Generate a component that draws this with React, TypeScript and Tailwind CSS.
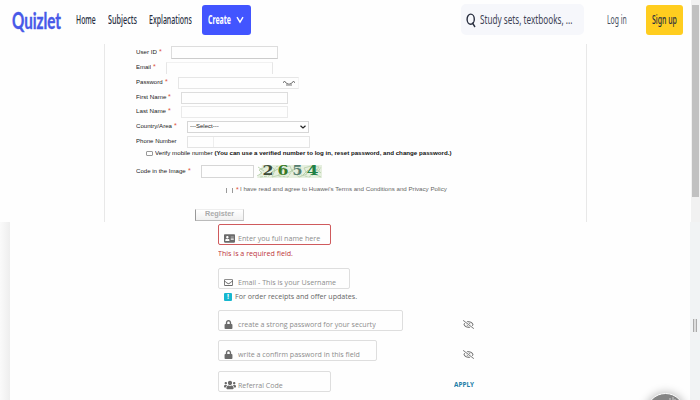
import { useLayoutEffect, useRef, useState } from "react";
import type { ReactNode } from "react";
import { FaAddressCard, FaLock, FaUsers, FaRegEnvelope, FaRegEyeSlash } from "react-icons/fa";

/* One line of text, condensed or widened to fill the width of its box. */
function Fit({ className, children }: { className: string; children: ReactNode }) {
  const box = useRef<HTMLDivElement>(null);
  const line = useRef<HTMLSpanElement>(null);
  const [scale, setScale] = useState(1);
  useLayoutEffect(() => {
    if (box.current && line.current) {
      setScale(box.current.clientWidth / line.current.offsetWidth);
    }
  }, []);
  return (
    <div ref={box} className={`shrink-0 whitespace-nowrap leading-none ${className}`}>
      <span ref={line} className="inline-block origin-left" style={{ transform: `scaleX(${scale})` }}>
        {children}
      </span>
    </div>
  );
}

function Star({ className = "" }: { className?: string }) {
  return <span className={`shrink-0 text-[7px] leading-[7px] text-[#e0523a] ${className}`}>*</span>;
}

function Row({ label, width, gap, star = true, height = "h-[15px]", children }: { label: string; width: string; gap: string; star?: boolean; height?: string; children: ReactNode }) {
  return (
    <div className={`flex items-center ${height} ${gap}`}>
      <div className="flex items-center gap-[2px]">
        <Fit className={`text-[5.6px] text-[#222] ${width}`}>{label}</Fit>
        {star && <Star className="-mt-[3px] w-[3px]" />}
      </div>
      {children}
    </div>
  );
}

function Field({ className, icon, children }: { className: string; icon: ReactNode; children: ReactNode }) {
  return (
    <div className={`flex h-[21px] shrink-0 items-center rounded-[2px] border pl-[5px] pt-[8px] text-[#6b6b6b] ${className}`}>
      <div className="-mt-px flex w-[14px] shrink-0 items-center">{icon}</div>
      {children}
    </div>
  );
}

function Header() {
  return (
    <header className="flex h-[44px] items-start pl-[12px] pt-[4px] font-['Noto_Sans',sans-serif]">
      <div className="flex h-[31px] flex-1 items-center">
        <Fit className="w-[49px] pt-[2px] font-['Lato',sans-serif] text-[22px] font-bold text-[#4759e8] [-webkit-text-stroke:0.4px_#4759e8]">Quizlet</Fit>
        <Fit className="ml-[15px] w-[20px] pt-px text-[12px] font-medium text-[#282e3e]">Home</Fit>
        <Fit className="ml-[12px] w-[29px] pt-px text-[12px] font-medium text-[#282e3e]">Subjects</Fit>
        <Fit className="ml-[12px] w-[43px] pt-px text-[12px] font-medium text-[#282e3e]">Explanations</Fit>
        <button className="ml-[10px] flex h-[30px] w-[49px] items-center rounded-[3px] bg-[#4255ff] pl-[6px] text-left text-white">
          <Fit className="w-[23px] text-[11.5px] font-bold">Create</Fit>
          <svg viewBox="0 0 8 8" className="ml-[5px] size-[8px]" fill="none" stroke="currentColor" strokeWidth="1.4">
            <path d="M1 1.2 4 6.2 7 1.2" />
          </svg>
        </button>
        <div className="ml-[210px] flex h-[31px] w-[123px] items-center rounded-[5px] bg-[#f6f7fb] pl-[5px] text-[#3d4355]">
          <svg viewBox="0 0 10 16" className="h-[16px] w-[10px]" fill="none" stroke="#282e3e" strokeWidth="1.4">
            <ellipse cx="4.7" cy="7.2" rx="3.6" ry="5.1" />
            <path d="M6.2 10.6 9 15" />
          </svg>
          <Fit className="ml-[4px] w-[92px] text-[12px]">Study sets, textbooks, ...</Fit>
        </div>
        <Fit className="ml-[23px] w-[20px] text-[12px] text-[#484e60]">Log in</Fit>
        <button className="ml-[19px] flex h-[30px] w-[37px] items-center rounded-[3px] bg-[#ffcd1f] pl-[6px] text-left text-[#282e3e]">
          <Fit className="w-[25px] text-[12px] font-medium">Sign up</Fit>
        </button>
      </div>
    </header>
  );
}

function Captcha() {
  return (
    <svg viewBox="0 0 65 13" className="ml-[3px] h-[13px] w-[65px] shrink-0" role="img">
      <path d="M5 0H65V13H0L3 8Z" fill="#e6efdf" />
      <g fill="none" stroke="#bfd5b3" strokeWidth="1">
        <path d="M0 11 5 8 2 5 8 2 14 1 18 5 15 12 23 10 27 2 33 1 35 6 42 12 50 9 47 3 54 1 62 2 57 9 64 12" />
        <path d="M3 12 12 11 20 1 25 5 21 11 31 12 38 1 44 3 40 9 52 12 61 7 64 2" strokeDasharray="3 1" />
        <path d="M1 2 7 6M15 7l6-3M31 8l7-4M46 10l5-5M59 4l5 4" stroke="#a5c596" strokeWidth=".7" />
      </g>
      <g fontFamily="DejaVu Serif, serif" fontSize="12" fontWeight="bold">
        <text x="5.5" y="10.3" textLength="11" lengthAdjust="spacingAndGlyphs" fill="#3c4a35">2</text>
        <text x="20.5" y="10.3" textLength="11" lengthAdjust="spacingAndGlyphs" fill="#397a28">6</text>
        <text x="35.5" y="10.3" textLength="10" lengthAdjust="spacingAndGlyphs" fill="#547d70">5</text>
        <text x="49.5" y="10.3" textLength="12" lengthAdjust="spacingAndGlyphs" fill="#218046">4</text>
      </g>
    </svg>
  );
}

function RegisterForm() {
  return (
    <section className="ml-[104px] flex h-[178px] w-[483px] flex-col border-x border-[#e8e8e8] pl-[31px] pt-px font-['Liberation_Sans',sans-serif]">
      <Row label="User ID" width="w-[21px]" gap="gap-[9px]">
        <div className="h-[13px] w-[107px] border border-[#ddd] border-b-[#ccc]" />
      </Row>
      <Row label="Email" width="w-[15px]" gap="gap-[10px]">
        <div className="h-[12px] w-[107px] border-x border-t border-[#e6e6e6] border-t-[#f1f1f1]" />
      </Row>
      <Row label="Password" width="w-[27px]" gap="gap-[10px]">
        <div className="flex h-[12px] w-[121px] items-center justify-end border border-[#e6e6e6] border-r-[#f4f4f4] pr-[3px]">
          <svg viewBox="0 0 12 6" className="h-[6px] w-[12px]" fill="none" stroke="#555" strokeWidth=".8">
            <path d="M0 3 1.5 1 3 3Q6 5.5 9 3L10.5 1 12 3M4 4v2M6 4.5V6M8 4v2" />
          </svg>
        </div>
      </Row>
      <Row label="First Name" width="w-[30px]" gap="gap-[10px]">
        <div className="h-[12px] w-[107px] border border-[#ddd]" />
      </Row>
      <Row label="Last Name" width="w-[30px]" gap="gap-[10px]" height="h-[14px]">
        <div className="h-[12px] w-[107px] border border-[#eaeaea]" />
      </Row>
      <Row label="Country/Area" width="w-[36px]" gap="gap-[10px]">
        <div className="flex h-[12px] w-[122px] items-center border border-[#d6d6d6] pl-[2px]">
          <Fit className="w-[29px] text-[5.6px] text-[#222]">---Select---</Fit>
          <svg viewBox="0 0 6 4" className="ml-auto mr-[2px] h-[4px] w-[6px]" fill="none" stroke="#222" strokeWidth="1.2">
            <path d="M.5.8 3 3 5.5.8" />
          </svg>
        </div>
      </Row>
      <Row label="Phone Number" width="w-[41px]" gap="gap-[10px]" star={false}>
        <div className="flex h-[12px] w-[123px] border border-[#e4e4e4]">
          <div className="w-[26px] border-r border-[#eee]" />
        </div>
      </Row>
      <div className="flex h-[9px] items-center pl-[10px]">
        <span className="h-[5px] w-[7px] shrink-0 rounded-[1px] border border-[#999]" />
        <Fit className="ml-[2px] w-[296px] text-[5.6px] text-[#111]">
          Verify mobile number <b>(You can use a verified number to log in, reset password, and change password.)</b>
        </Fit>
      </div>
      <div className="mt-[7px] flex h-[13px] items-center">
        <Fit className="w-[50px] text-[5.6px] text-[#222]">Code in the Image</Fit>
        <Star className="-mt-[3px] ml-[2px] w-[3px]" />
        <div className="ml-[10px] h-[13px] w-[53px] border border-[#d6d6d6]" />
        <Captcha />
      </div>
      <div className="mt-[8px] flex h-[8px] items-center pl-[90px]">
        <span className="h-[5px] w-[7px] shrink-0 border-x border-[#999]" />
        <Star className="-mt-[2px] ml-[3px] w-[3px]" />
        <Fit className="ml-px w-[207px] text-[5.6px] text-[#666]">
          I have read and agree to Huawei's Terms and Conditions and Privacy Policy
        </Fit>
      </div>
      <button className="ml-[59px] mt-[15px] flex h-[12px] w-[49px] shrink-0 items-center border border-[#bbb] border-l-[#999] border-t-[#eee] border-r-[#ccc] bg-linear-to-b from-white to-[#f0f0f0] pl-[9px] text-left text-[#aaa]">
        <Fit className="w-[29px] pb-px text-[6.5px] font-bold">Register</Fit>
      </button>
    </section>
  );
}

function AccountForm() {
  return (
    <section className="flex h-[178px] w-[690px] font-['Open_Sans',sans-serif]">
      <div className="w-[10px] shrink-0 bg-linear-to-r from-[#fafafa] to-[#eee]" />
      <div className="flex w-[472px] flex-col pl-[208px] pt-[2px]">
        <Field className="w-[113px] border-[#cf5a5d]" icon={<FaAddressCard size={11} />}>
          <Fit className="w-[82px] text-[7.5px] text-[#8d8d8d]">Enter you full name here</Fit>
        </Field>
        <Fit className="mt-[5px] h-[8px] w-[75px] text-[7.5px] text-[#bd343b]">This is a required field.</Fit>
        <Field className="mt-[10px] w-[132px] border-[#dedede]" icon={<FaRegEnvelope size={9} />}>
          <Fit className="w-[98px] text-[7.5px] text-[#8d8d8d]">Email - This is your Username</Fit>
        </Field>
        <div className="mt-[3px] flex h-[9px] items-center pl-[6px]">
          <span className="flex size-[8px] items-center justify-center rounded-[1px] bg-[#16b7cf] text-[7px] font-bold leading-none text-white">!</span>
          <Fit className="ml-[3px] w-[122px] text-[7.5px] text-[#666]">For order receipts and offer updates.</Fit>
        </div>
        <div className="mt-[9px] flex">
          <Field className="w-[185px] border-[#dedede]" icon={<FaLock size={9} />}>
            <Fit className="w-[138px] text-[7.5px] text-[#8d8d8d]">create a strong password for your securty</Fit>
          </Field>
          <FaRegEyeSlash size={11} className="ml-[60px] mt-[9px] shrink-0 text-[#666]" />
        </div>
        <div className="mt-[9px] flex">
          <Field className="w-[159px] border-[#dedede]" icon={<FaLock size={9} />}>
            <Fit className="w-[122px] text-[7.5px] text-[#8d8d8d]">write a confirm password in this field</Fit>
          </Field>
          <FaRegEyeSlash size={11} className="ml-[86px] mt-[9px] shrink-0 text-[#666]" />
        </div>
        <div className="mt-[10px] flex">
          <Field className="w-[113px] border-[#dedede]" icon={<FaUsers size={12} />}>
            <Fit className="w-[45px] text-[7.5px] text-[#8d8d8d]">Referral Code</Fit>
          </Field>
          <Fit className="ml-[123px] mt-[10px] w-[20px] text-[7px] font-bold text-[#207da7]">APPLY</Fit>
        </div>
      </div>
    </section>
  );
}

export default function App() {
  return (
    <div className="relative flex h-[400px] w-[700px] overflow-hidden bg-[#fefefe]">
      <main className="w-[690px] shrink-0">
        <Header />
        <RegisterForm />
        <AccountForm />
      </main>
      <aside className="flex w-[10px] flex-col">
        <div className="flex h-[222px] justify-end">
          <div className="w-[9px] bg-[#f1f1f1] px-px pt-[5px]">
            <div className="h-[192px] bg-[#c1c1c1]" />
          </div>
        </div>
        <div className="flex flex-1 items-start bg-[#f1f3f4] pl-[3px] pt-[97px]">
          <div className="h-[13px] w-[4px] border-x border-[#aaa] bg-[#ddd]" />
        </div>
      </aside>
      <div className="absolute left-[646px] top-[393px] size-[39px] rounded-full border border-white bg-[#858585] shadow-[0_0_8px_1px_rgba(0,0,0,0.25)]">
        <svg viewBox="0 0 8 6" className="ml-[21px] mt-[3px] h-[6px] w-[8px]" stroke="#ccc" strokeWidth="1">
          <path d="M2 1v4M5 0v5M7 2v4" />
        </svg>
      </div>
    </div>
  );
}
